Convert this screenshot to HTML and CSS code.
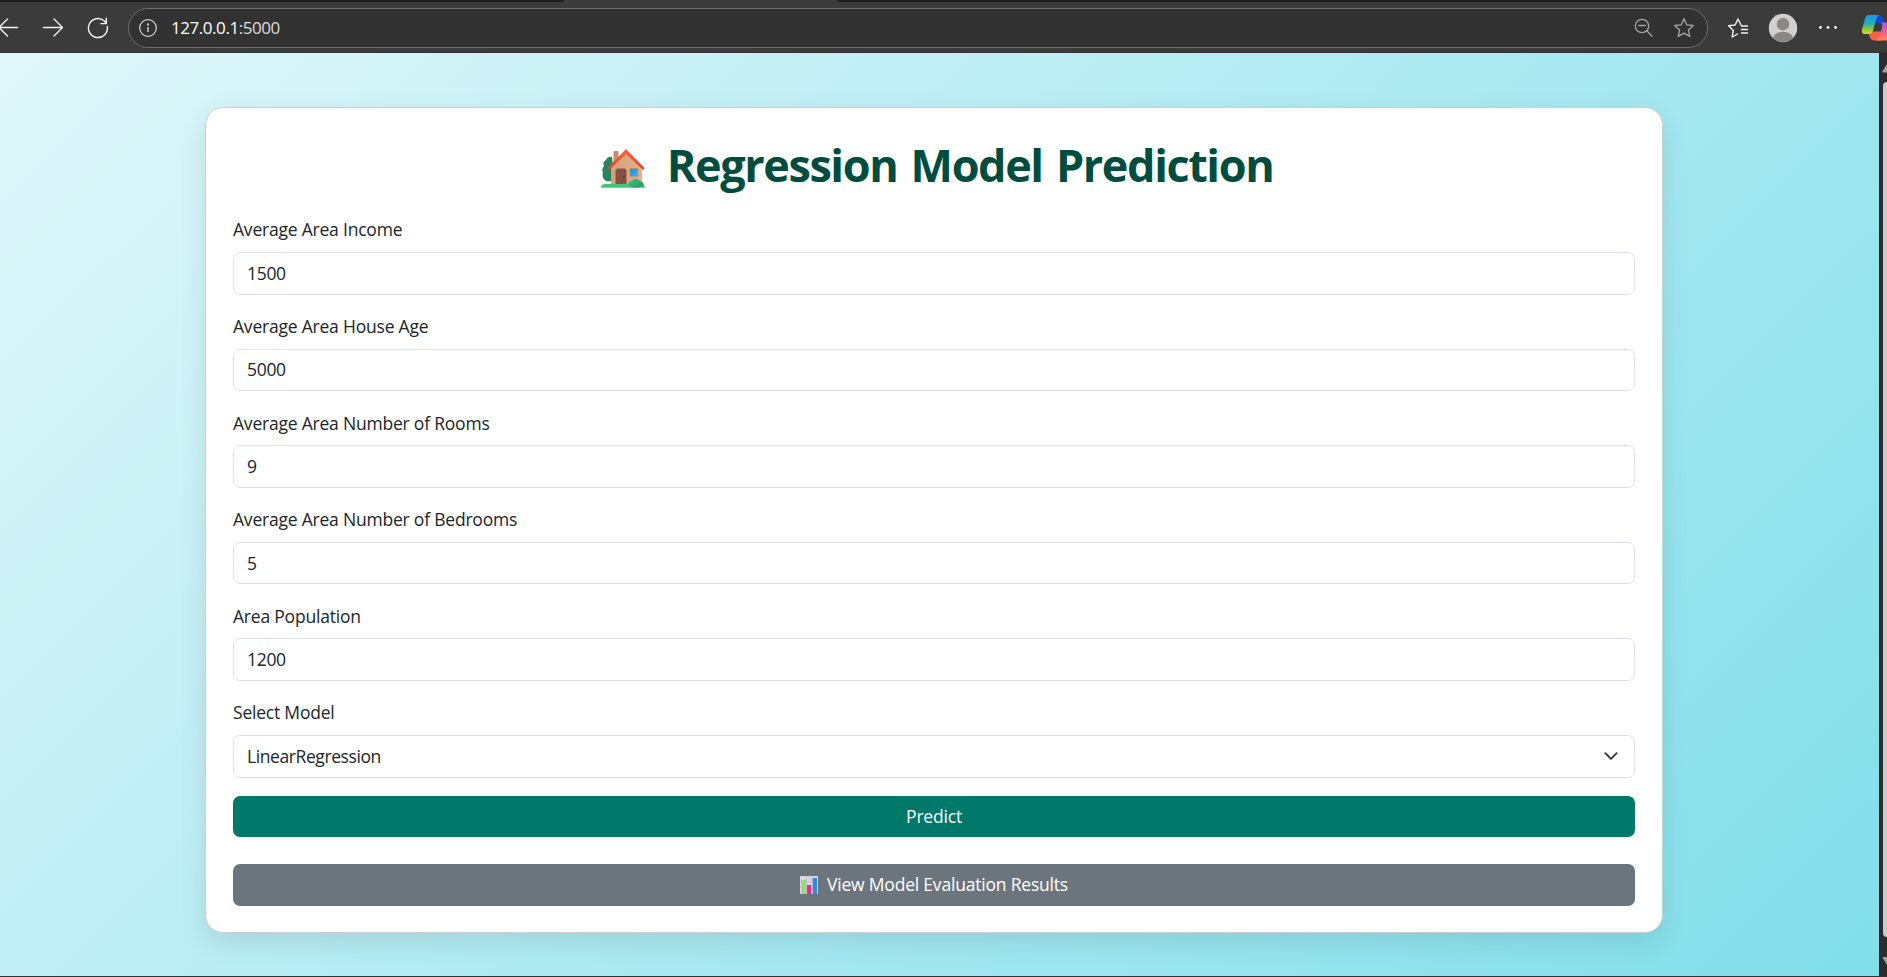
FILE: index.html
```html
<!DOCTYPE html>
<html lang="en">
<head>
<meta charset="utf-8">
<title>Regression Model Prediction</title>
<link rel="stylesheet" href="styles.css">
</head>
<body>
<header class="chrome">
  <div class="tabstrip"><span class="tab-left"></span><span class="tab-active"></span><span class="tab-right"></span></div>
  <div class="toolbar">
    <svg class="nav-icons" width="128" height="50" viewBox="0 3 128 50" fill="none" stroke="#f2f2f2" stroke-width="1.4" stroke-linecap="round" stroke-linejoin="round">
      <path d="M17.5 27.5H-1M7.500 19l-8.500 8.500 8.500 8.500"/>
      <path d="M43.500 27.500h19M54 19l8.500 8.500L54 36"/>
      <path d="M107.300 26.500a9.500 9.500 0 1 1-3-5.500l2 2.200M106.300 18.200v5.400h-5.400"/>
    </svg>
    <div class="address">
      <svg width="20" height="20" viewBox="0 0 20 20" fill="none" stroke="#cfcfcf" stroke-width="1.300"><circle cx="10" cy="10" r="8.300"/><path d="M10 9v5" stroke-width="1.500"/><circle cx="10" cy="6.500" r=".5"/></svg>
      <span class="url"><b>127.0.0.1</b>:5000</span>
      <svg class="zoom-icon" width="20" height="20" viewBox="0 0 20 20" fill="none" stroke="#a5a5a5" stroke-width="1.300" stroke-linecap="round"><circle cx="8" cy="8" r="6.700"/><path d="M4.800 7.500h6.500M12.800 12.800l5.200 5.500"/></svg>
      <svg class="star-icon" width="22" height="22" viewBox="0 0 22 22" fill="none" stroke="#a5a5a5" stroke-width="1.300" stroke-linejoin="round"><path d="m11 1.800 2.700 6 6.600.7-4.900 4.400 1.400 6.500-5.800-3.300-5.800 3.300 1.400-6.500-4.900-4.400 6.600-.7z"/></svg>
    </div>
    <svg class="tools" width="179" height="50" viewBox="1709 3 179 50">
      <defs>
        <linearGradient id="copA" x1="0" y1="0" x2="0" y2="1"><stop offset="0" stop-color="#149be8"/><stop offset=".45" stop-color="#2aa9b5"/><stop offset=".75" stop-color="#8bc83d"/><stop offset="1" stop-color="#f7d51d"/></linearGradient>
        <linearGradient id="copB" x1="0" y1="0" x2="0" y2="1"><stop offset="0" stop-color="#a45ce8"/><stop offset=".5" stop-color="#ef579a"/><stop offset="1" stop-color="#ff8a4a"/></linearGradient>
        <clipPath id="avatar"><circle cx="1784" cy="28" r="14"/></clipPath>
      </defs>
      <g fill="none" stroke="#f2f2f2" stroke-width="1.400" stroke-linecap="round" stroke-linejoin="round">
        <path d="M1748.500 26h-6l-3.500-7-2.900 6-6.500.8 4.700 4.700-1.200 6.500 5.400-3"/>
        <path d="M1742.500 29.500h6M1742.500 33h6"/>
      </g>
      <circle cx="1784" cy="28" r="14.200" fill="#d2d0ce"/>
      <g fill="#8a8886" clip-path="url(#avatar)"><circle cx="1784" cy="24.200" r="6.200"/><ellipse cx="1784" cy="39" rx="10.500" ry="7.200"/></g>
      <g fill="#f4f4f4"><circle cx="1821.500" cy="27.500" r="1.400"/><circle cx="1829" cy="27.500" r="1.400"/><circle cx="1836.500" cy="27.500" r="1.400"/></g>
      <path d="M1870 34q1 6.500 5 6.500h7l4-9h-12z" fill="#f3624c"/>
      <path d="M1873 15h7q3 0 4 4l1.500 4.500h-8z" fill="#1646d2"/>
      <path d="M1869.500 15h10.500q-2 1-3 5l-3 10.500q-1 3.500-4 3.500h-4q-4 0-3-5l3-10q1-4 3.500-4z" fill="url(#copA)"/>
      <path d="M1882 22.500h8v18h-13q3-1 4-5l2-8q1-4-1-5z" fill="url(#copB)"/>
    </svg>
  </div>
</header>
<div class="viewport">
  <main class="page">
    <section class="card">
      <h1 class="title">
        <svg class="house" width="46" height="42" viewBox="0 0 46 42">
          <defs>
            <linearGradient id="wall" x1="0" y1="0" x2="1" y2="0"><stop offset="0" stop-color="#d3a17c"/><stop offset="1" stop-color="#e4b184"/></linearGradient>
            <linearGradient id="roof" x1="0" y1="0" x2="0" y2="1"><stop offset="0" stop-color="#fb6b31"/><stop offset="1" stop-color="#e13c3d"/></linearGradient>
            <linearGradient id="pane" x1="0" y1="0" x2="1" y2="1"><stop offset="0" stop-color="#1d87d9"/><stop offset="1" stop-color="#36b7f7"/></linearGradient>
            <linearGradient id="bush" x1="0" y1="0" x2="1" y2="1"><stop offset="0" stop-color="#43c583"/><stop offset="1" stop-color="#239467"/></linearGradient>
          </defs>
          <path d="M12 9q-4-1-6 3-4 2-2 6-3 4-1 6-2 6 3 9h9z" fill="#28845b"/>
          <rect x="13.500" y="3" width="5" height="12" rx="1" fill="#c68f6c"/>
          <path d="M11 18 26 4l16 15v20H11z" fill="url(#wall)"/>
          <path d="m26 1 18 18.500q1 2-1.500 2L26 6 9.500 21.500q-2.500 0-1.500-2z" fill="url(#roof)"/>
          <path d="M15.500 36V23q0-2.500 2.500-2.500h6q2.500 0 2.500 2.500v13z" fill="#875044"/>
          <circle cx="24" cy="28.500" r="1" fill="#5c302c"/>
          <rect x="30" y="20.500" width="8" height="8" rx=".6" fill="url(#pane)" stroke="#c38d6b" stroke-width=".7"/>
          <path d="M1 39.700q0-3.700 4-3.700h36q4 0 4 3.700z" fill="#3cc77b"/>
          <path d="M29 38q-2-4 2-5 5-5 9 0 5 1 3 5-7 3-14 0z" fill="url(#bush)"/>
        </svg>
        <span class="title-text">Regression Model Prediction</span>
      </h1>
      <form class="form">
        <div class="field"><label class="label">Average Area Income</label><div class="control">1500</div></div>
        <div class="field"><label class="label">Average Area House Age</label><div class="control">5000</div></div>
        <div class="field"><label class="label">Average Area Number of Rooms</label><div class="control">9</div></div>
        <div class="field"><label class="label">Average Area Number of Bedrooms</label><div class="control">5</div></div>
        <div class="field"><label class="label">Area Population</label><div class="control">1200</div></div>
        <div class="field"><label class="label">Select Model</label><div class="control select">LinearRegression
          <svg width="18" height="18" viewBox="0 0 16 16" fill="none" stroke="#343a40" stroke-width="1.700" stroke-linecap="round" stroke-linejoin="round"><path d="m3 5.500 5 5 5-5"/></svg></div></div>
        <div class="button primary">Predict</div>
        <div class="button secondary">
          <svg class="chart" width="18" height="18" viewBox="0 0 18 18">
            <rect width="18" height="18" rx="1" fill="#dcd6e4"/>
            <path d="M6.500 0v18M12 0v18M0 5.500h18M0 11.500h18" stroke="#bdb5cb" stroke-width=".7"/>
            <rect x="1.500" y="4" width="4.500" height="14" fill="#8fdc78"/>
            <rect x="7" y="9" width="4.200" height="9" fill="#e72e78"/>
            <rect x="12.800" y="2" width="4.200" height="16" fill="#3188dc"/>
          </svg>
          <span>View Model Evaluation Results</span>
        </div>
      </form>
    </section>
  </main>
  <aside class="scrollbar">
    <svg width="8" height="29" viewBox="0 0 8 29"><path d="M8 11 3.500 18q-1 1.500 1 1.500H8z" fill="#9f9f9f"/></svg>
    <div class="thumb"></div>
    <svg width="8" height="39" viewBox="0 0 8 39"><path d="M8 28 4 21.500q-1-1.500 1-1.500h3z" fill="#9f9f9f"/></svg>
  </aside>
</div>
</body>
</html>
```

FILE: styles.css
```css
* { box-sizing: border-box; }
body {
  margin: 0;
  height: 977px;
  overflow: hidden;
  display: flex;
  flex-direction: column;
  background: #333;
  color: #212529;
  font-family: "Open Sans", "Noto Sans", sans-serif;
  font-size: 17.5px;
  line-height: 27px;
}
svg { display: block; flex: none; }

.chrome { height: 53px; background: #3b3b3b; border-bottom: 1px solid #333; }
.tabstrip { height: 3px; display: flex; background: #3b3b3b; }
.tab-left { width: 564px; height: 2px; background: #1f1f1f; border-bottom-right-radius: 3px; }
.tab-active { width: 274px; }
.tab-right { flex: 1; height: 2px; background: #1f1f1f; border-bottom-left-radius: 3px; }
.toolbar { height: 49px; display: flex; align-items: flex-start; }
.address {
  width: 1580px;
  height: 40px;
  margin-top: 5px;
  padding: 0 12px 0 9px;
  border: 1px solid #6c6c6c;
  border-radius: 20px;
  background: #323232;
  display: flex;
  align-items: center;
}
.url { margin: 0 0 2px 13px; color: #dedede; font-size: 17px; letter-spacing: -0.45px; }
.url b { font-weight: 400; color: #fff; }
.zoom-icon { margin-left: auto; }
.star-icon { margin-left: 19px; }

.viewport { height: 923px; display: flex; }
.page {
  width: 1879px;
  padding-top: 54px;
  background: linear-gradient(135deg, #e0f7fa, #80deea);
}
.card {
  width: 1458px;
  height: 826px;
  margin: 0 0 0 205px;
  padding: 26px 27px;
  background: #fff;
  border: 1px solid #cacfd1;
  border-radius: 18px;
  box-shadow: 0 9px 27px rgba(0, 0, 0, .1);
}
.title {
  height: 54px;
  margin: 4px 0 24.4px;
  padding-left: 5px;
  display: flex;
  align-items: center;
  justify-content: center;
  gap: 21px;
  color: #004d40;
  font-size: 45px;
  line-height: 54px;
  font-weight: 700;
}
.house { margin-top: 7px; }
.title-text { white-space: nowrap; letter-spacing: -1.4px; word-spacing: 3px; }
.field { height: 96.6px; }
.label { display: block; height: 27px; margin-bottom: 8.6px; letter-spacing: -0.21px; }
.control {
  height: 42.7px;
  padding: 0 14px 0 13px;
  border: 1px solid #dee2e6;
  border-radius: 7px;
  letter-spacing: -0.3px;
  display: flex;
  align-items: center;
}
.select { justify-content: space-between; letter-spacing: -0.41px; }
.button {
  height: 42px;
  border-radius: 7px;
  color: #fff;
  letter-spacing: -0.2px;
  display: flex;
  align-items: center;
  justify-content: center;
  gap: 9px;
}
.primary { height: 41px; margin: -0.4px 0 27px; background: #00796b; }
.secondary { background: #6c757d; }

.scrollbar { width: 8px; background: #2c2c2c; }
.thumb { height: 855px; margin-left: 4px; border-radius: 5px 0 0 5px; background: #c8c8c8; }
```
